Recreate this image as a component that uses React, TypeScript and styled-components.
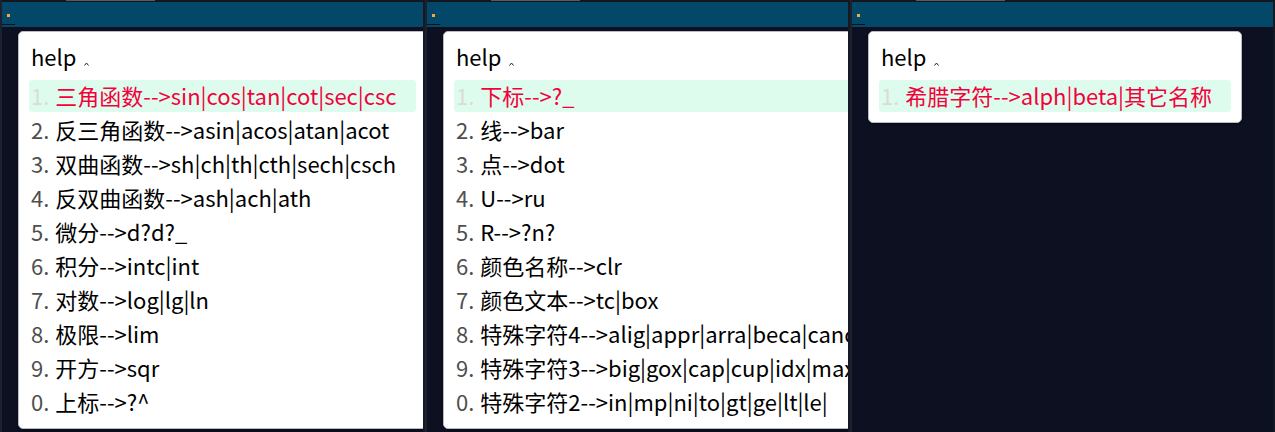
import { createGlobalStyle, styled } from 'styled-components'

const GlobalStyle = createGlobalStyle`
  html, body {
    margin: 0;
    padding: 0;
    background: #0d1020;
    overflow: hidden;
  }
`

const Screen = styled.div`
  display: flex;
  width: 1275px;
  height: 432px;
  background: #0d1020;
  font-family: "Noto Sans CJK SC", "Noto Sans", sans-serif;
`

const Pane = styled.section`
  flex: 0 0 421px;
  display: flex;
  flex-direction: column;
  overflow: hidden;
  border-left: 2px solid #1b212d;
  border-right: 2px solid #141926;
`

const TopStrip = styled.div`
  height: 2px;
  background: #12161f;
  display: flex;
`

const TabMark = styled.div`
  margin-left: 64px;
  width: 89px;
  height: 1px;
  background: #5a5a5a;
`

const Header = styled.div`
  height: 25px;
  background: #034869;
  position: relative;
`

const StatusDot = styled.span`
  position: absolute;
  left: 5px;
  top: 12px;
  width: 3px;
  height: 3px;
  background: #f5a53a;
`

const Underline = styled.span`
  position: absolute;
  left: 0;
  top: 22px;
  width: 13px;
  height: 1px;
  background: #101010;
`

const Body = styled.div`
  padding: 4px 0 0 16px;
`

const Card = styled.div`
  width: max-content;
  display: flex;
  flex-direction: column;
  gap: 2px;
  padding: 0 10px 10px;
  background: #ffffff;
  border: 1px solid #b9bcc2;
  border-radius: 5px;
  box-shadow: 0 1px 2px rgba(0, 0, 0, 0.5);
`

const Title = styled.div`
  display: flex;
  align-items: baseline;
  height: 34px;
  line-height: 34px;
  margin: 7px 0 5px;
  padding-left: 2px;
  font-size: 22px;
  color: #000;
`

const Caret = styled.svg`
  margin-left: 8px;
  width: 5px;
  height: 4px;
`

const Row = styled.div<{ $active?: boolean }>`
  height: 32px;
  box-sizing: border-box;
  line-height: 30px;
  padding: 0 19px 2px 2px;
  border-radius: 3px;
  font-size: 22px;
  white-space: nowrap;
  color: ${(p) => (p.$active ? '#f4003d' : '#000')};
  background: ${(p) => (p.$active ? '#ddfced' : 'transparent')};
`

const Num = styled.span<{ $active?: boolean }>`
  color: ${(p) => (p.$active ? '#d8dcda' : '#4f4f4f')};
  margin-right: 6px;
`

const panes: string[][] = [
  [
    '三角函数-->sin|cos|tan|cot|sec|csc',
    '反三角函数-->asin|acos|atan|acot',
    '双曲函数-->sh|ch|th|cth|sech|csch',
    '反双曲函数-->ash|ach|ath',
    '微分-->d?d?_',
    '积分-->intc|int',
    '对数-->log|lg|ln',
    '极限-->lim',
    '开方-->sqr',
    '上标-->?^',
  ],
  [
    '下标-->?_',
    '线-->bar',
    '点-->dot',
    'U-->ru',
    'R-->?n?',
    '颜色名称-->clr',
    '颜色文本-->tc|box',
    '特殊字符4-->alig|appr|arra|beca|canc',
    '特殊字符3-->big|gox|cap|cup|idx|max',
    '特殊字符2-->in|mp|ni|to|gt|ge|lt|le|',
  ],
  ['希腊字符-->alph|beta|其它名称'],
]

export default function App() {
  return (
    <>
      <GlobalStyle />
      <Screen>
        {panes.map((items, pi) => (
          <Pane key={pi}>
            <TopStrip>
              <TabMark />
            </TopStrip>
            <Header>
              <StatusDot />
              <Underline />
            </Header>
            <Body>
              <Card>
                <Title>
                  help
                  <Caret viewBox="0 0 5 4">
                    <polyline points="0.5,3.5 2.5,1 4.5,3.5" fill="none" stroke="#222" strokeWidth="1" />
                  </Caret>
                </Title>
                {items.map((text, i) => (
                  <Row key={i} $active={i === 0}>
                    <Num $active={i === 0}>{(i + 1) % 10}.</Num>
                    {text}
                  </Row>
                ))}
              </Card>
            </Body>
          </Pane>
        ))}
      </Screen>
    </>
  )
}
